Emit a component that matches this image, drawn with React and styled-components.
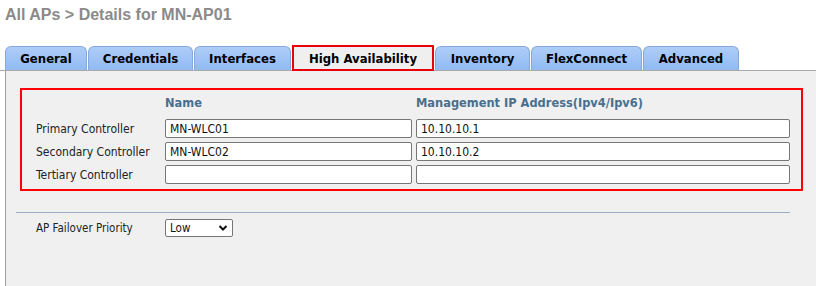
import React from 'react';
import styled, { createGlobalStyle } from 'styled-components';

const GlobalStyle = createGlobalStyle`
  html, body {
    margin: 0;
    padding: 0;
    background: #ffffff;
    height: 100%;
  }
  body {
    font-family: "DejaVu Sans Condensed", "DejaVu Sans", sans-serif;
  }
`;

const Page = styled.div`
  width: 816px;
  height: 286px;
  overflow: hidden;
  display: flex;
  flex-direction: column;
`;

const Title = styled.h1`
  margin: 0;
  padding: 5px 0 0 5px;
  font-family: "Liberation Sans", Arial, sans-serif;
  font-size: 16px;
  font-weight: bold;
  color: #8a8a8a;
  line-height: 20px;
`;

const TabBar = styled.div`
  display: flex;
  align-items: flex-end;
  margin-top: 21px;
  padding-left: 5px;
  height: 24px;
  border-bottom: 1px solid #a9a9a9;
`;

const Tab = styled.div`
  box-sizing: border-box;
  height: 24px;
  width: ${p => p.w}px;
  margin-right: 1px;
  display: flex;
  align-items: center;
  justify-content: center;
  font-weight: bold;
  font-size: 13px;
  color: #000;
  border: 1px solid #86a9dc;
  border-bottom: none;
  border-radius: 6px 6px 0 0;
  background: linear-gradient(#aecdf8, #91baf2);
`;

const ActiveTab = styled(Tab)`
  height: 26px;
  margin-bottom: -1px;
  padding-top: 1px;
  border: 2px solid #e8000b;
  border-radius: 0;
  background: #efefef;
`;

const Panel = styled.div`
  flex: 1;
  margin-left: 5px;
  background: #f0f0f0;
  border-left: 1px solid #a0a0a0;
  padding: 17px 0 0 0;
`;

const HighlightBox = styled.div`
  margin: 0 13px 0 14px;
  border: 2px solid #ff0000;
  padding: 3px 11px 5px 14px;
`;

const Grid = styled.div`
  display: grid;
  grid-template-columns: 125px 247px 374px;
  column-gap: 4px;
  row-gap: 4px;
  align-items: center;
`;

const Header = styled.div`
  font-weight: bold;
  font-size: 12.7px;
  color: #4a6f8e;
  height: 20px;
  line-height: 20px;
  margin-bottom: 2px;
`;

const Label = styled.div`
  font-size: 12px;
  color: #222;
`;

const TextInput = styled.input`
  box-sizing: border-box;
  height: 19px;
  width: 100%;
  border: 1px solid #767676;
  border-radius: 2px;
  background: #fff;
  padding: 0 4px;
  font-family: "DejaVu Sans Condensed", "DejaVu Sans", sans-serif;
  font-size: 12px;
  color: #111;
  outline: none;
`;

const Divider = styled.hr`
  margin: 21px 26px 0 10px;
  border: none;
  border-top: 1px solid #a2a9c6;
  height: 0;
`;

const OptionRow = styled.div`
  display: flex;
  align-items: center;
  margin-top: 6px;
  padding-left: 30px;
`;

const OptionLabel = styled.div`
  width: 129px;
  font-size: 11.5px;
  color: #222;
`;

const SelectBox = styled.div`
  box-sizing: border-box;
  width: 68px;
  height: 18px;
  border: 1px solid #767676;
  border-radius: 2px;
  background: #fff;
  display: flex;
  align-items: center;
  justify-content: space-between;
  padding: 0 4px 0 4px;
  font-size: 11.5px;
  color: #111;
`;

const tabs = [
  ['General', 82],
  ['Credentials', 105],
  ['Interfaces', 97],
  ['High Availability', 142],
  ['Inventory', 95],
  ['FlexConnect', 111],
  ['Advanced', 96],
];

const rows = [
  ['Primary Controller', 'MN-WLC01', '10.10.10.1'],
  ['Secondary Controller', 'MN-WLC02', '10.10.10.2'],
  ['Tertiary Controller', '', ''],
];

export default function App() {
  return (
    <Page>
      <GlobalStyle />
      <Title>All APs &gt; Details for MN-AP01</Title>
      <TabBar>
        {tabs.map(([name, w]) =>
          name === 'High Availability'
            ? <ActiveTab key={name} w={w}>{name}</ActiveTab>
            : <Tab key={name} w={w}>{name}</Tab>
        )}
      </TabBar>
      <Panel>
        <HighlightBox>
          <Grid>
            <div />
            <Header>Name</Header>
            <Header>Management IP Address(Ipv4/Ipv6)</Header>
            {rows.map(([label, name, ip]) => (
              <React.Fragment key={label}>
                <Label>{label}</Label>
                <TextInput defaultValue={name} />
                <TextInput defaultValue={ip} />
              </React.Fragment>
            ))}
          </Grid>
        </HighlightBox>
        <Divider />
        <OptionRow>
          <OptionLabel>AP Failover Priority</OptionLabel>
          <SelectBox>
            <span>Low</span>
            <svg width="10" height="8" viewBox="0 0 10 8">
              <path d="M1.5 2 L5 5.5 L8.5 2" fill="none" stroke="#111" strokeWidth="2" />
            </svg>
          </SelectBox>
        </OptionRow>
      </Panel>
    </Page>
  );
}
